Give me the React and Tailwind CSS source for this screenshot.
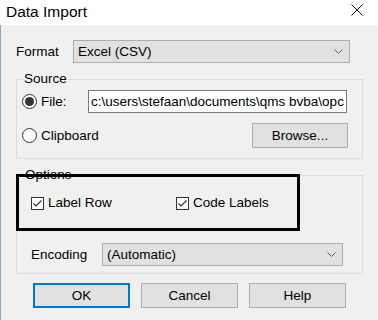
import React from 'react';

function Chevron() {
  return (
    <svg width="9" height="5" viewBox="0 0 9 5" className="flex-shrink-0">
      <polyline points="0.5,0.5 4.5,4.5 8.5,0.5" fill="none" stroke="#606060" strokeWidth="1" />
    </svg>
  );
}

function Combo({ value, className }) {
  return (
    <div className={`h-[23px] bg-[#e1e1e1] border border-[#adadad] flex items-center justify-between pl-[4px] pr-[6px] ${className}`}>
      <span>{value}</span>
      <Chevron />
    </div>
  );
}

function Radio({ checked, label }) {
  return (
    <div className="flex items-center">
      <span className="w-[15px] h-[15px] rounded-full border border-[#333] bg-white flex items-center justify-center">
        {checked && <span className="w-[9px] h-[9px] rounded-full bg-[#333]"></span>}
      </span>
      <span className="ml-[4px]">{label}</span>
    </div>
  );
}

function Checkbox({ label, className = '' }) {
  return (
    <div className={`flex items-center ${className}`}>
      <span className="w-[13px] h-[13px] border border-[#333] bg-white flex items-center justify-center">
        <svg width="11" height="11" viewBox="0 0 11 11">
          <polyline points="1.5,5.5 4,8 9.5,2.5" fill="none" stroke="#333" strokeWidth="1.2" />
        </svg>
      </span>
      <span className="ml-[4px]">{label}</span>
    </div>
  );
}

function Button({ children, primary }) {
  return (
    <div
      className={`w-[97px] h-[25px] bg-[#e1e1e1] flex items-center justify-center ${
        primary ? 'border-2 border-[#0078d7]' : 'border border-[#adadad]'
      }`}
    >
      {children}
    </div>
  );
}

export default function App() {
  return (
    <div className="w-[378px] h-[320px] bg-[#f0f0f0] overflow-hidden text-black text-[13.5px] leading-[16px] font-['Liberation_Sans',Arial,sans-serif]">
      {/* Title bar */}
      <div className="h-[25px] bg-white flex items-start justify-between">
        <span className="text-[15.5px] leading-[17px] pt-[3px] pl-[6px]">Data Import</span>
        <svg width="12" height="12" viewBox="0 0 12 12" className="mt-[4px] mr-[15px]">
          <path d="M0.5 0.5 L11.5 11.5 M11.5 0.5 L0.5 11.5" stroke="#111" strokeWidth="1" />
        </svg>
      </div>

      {/* Body */}
      <div className="h-[295px] border-l border-[#8ea4bb] pl-[15px] pt-[15px]">
        {/* Format */}
        <div className="flex items-center h-[23px]">
          <span className="w-[57px]">Format</span>
          <Combo value="Excel (CSV)" className="w-[277px]" />
        </div>

        {/* Source */}
        <fieldset className="mt-[8px] w-[347px] border border-[#dcdcdc] p-0 m-0">
          <legend className="ml-[6px] px-[1px] leading-[16px]">Source</legend>
          <div className="pt-[3px] pl-[5px] pr-[14px] pb-[10px]">
            <div className="flex items-center h-[23px]">
              <div className="w-[66px]">
                <Radio checked label="File:" />
              </div>
              <div className="w-[259px] h-[23px] bg-white border border-[#7a7a7a] flex items-center pl-[2px] overflow-hidden whitespace-nowrap">
                c:\users\stefaan\documents\qms bvba\opc
              </div>
            </div>
            <div className="mt-[10px] flex items-center justify-between h-[25px]">
              <Radio label="Clipboard" />
              <div className="w-[96px] h-[25px] bg-[#e1e1e1] border border-[#adadad] flex items-center justify-center">
                Browse...
              </div>
            </div>
          </div>
        </fieldset>

        {/* Options */}
        <div className="relative mt-[8px] w-[347px]">
          <fieldset className="w-[347px] border border-[#dcdcdc] p-0 m-0">
            <legend className="ml-[7px] px-[1px] leading-[16px]">Options</legend>
            <div className="pt-[12px] pl-[14px] pb-[7px]">
              <div className="flex items-center h-[16px]">
                <Checkbox label="Label Row" className="w-[145px]" />
                <Checkbox label="Code Labels" />
              </div>
              <div className="mt-[32px] flex items-center h-[23px]">
                <span className="w-[71px]">Encoding</span>
                <Combo value="(Automatic)" className="w-[241px]" />
              </div>
            </div>
          </fieldset>
          {/* annotation box */}
          <div className="absolute top-[7px] left-0 w-[284px] h-[57px] border-[3px] border-black"></div>
        </div>

        {/* Buttons */}
        <div className="mt-[9px] ml-[17px] flex gap-[11px]">
          <Button primary>OK</Button>
          <Button>Cancel</Button>
          <Button>Help</Button>
        </div>
      </div>
    </div>
  );
}
